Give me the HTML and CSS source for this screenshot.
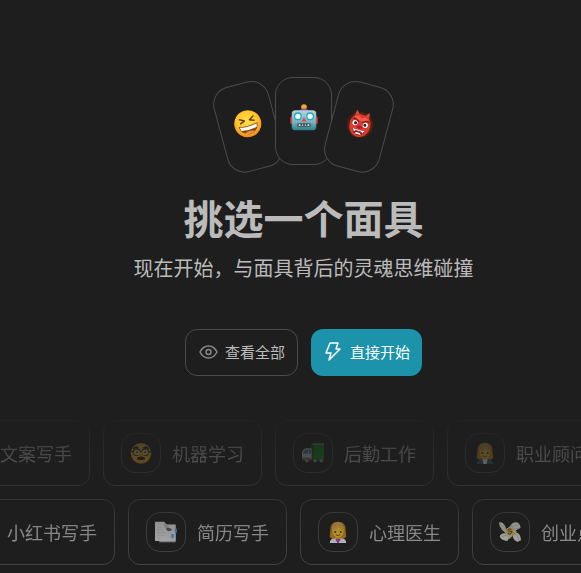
FILE: index.html
```html
<!DOCTYPE html>
<html lang="zh-CN">
<head>
  <meta charset="UTF-8" />
  <meta name="viewport" content="width=device-width, initial-scale=1" />
  <title>挑选一个面具</title>
  <link rel="stylesheet" href="styles.css">
</head>
<body>
  <!-- shared by two of the mask cards -->
  <svg class="sprite" aria-hidden="true">
    <symbol id="woman-head" viewBox="0 0 32 32">
      <path d="M16 1C9 1 5 5 5 12c0 4-1 8-1 11 2 3 6 3 9 2h6c3 1 7 1 9-2 0-3-1-7-1-11 0-7-4-11-11-11z" fill="#cf8a1c"/>
      <path d="M12 21h8v6h-8z" fill="#d99a1c"/>
      <path d="M16 7c-5 1-7 3-8 7 0 6 4 10 8 10s8-4 8-10c-1-4-3-6-8-7z" fill="#fdcb32"/>
      <path d="M16 1c5 1 9 5 9 13-4-1-8-4-9-7-1 4-4 6-9 7 0-7 3-12 9-13z" fill="#e6ac48"/>
      <circle cx="12" cy="16" r="1.5" fill="#493118"/>
      <circle cx="20" cy="16" r="1.5" fill="#493118"/>
      <path d="M13 20q3 2 6 0" stroke="#a6501b" stroke-width="1.5" fill="none"/>
    </symbol>
  </svg>

  <main class="page">
    <section class="hero">
      <div class="cards">
        <div class="card card-left">
          <svg class="emoji" viewBox="0 0 32 32" aria-hidden="true">
            <defs>
              <radialGradient id="face" cx=".5" cy=".4" r=".6">
                <stop offset="0" stop-color="#ffe04a"/>
                <stop offset=".65" stop-color="#ffc42c"/>
                <stop offset="1" stop-color="#f0851c"/>
              </radialGradient>
            </defs>
            <circle cx="16" cy="16" r="15.5" fill="url(#face)"/>
            <path d="M8 9l5 3-5 2M24 9l-5 3 5 2" stroke="#65400e" stroke-width="1.7" fill="none" stroke-linecap="round" stroke-linejoin="round"/>
            <path d="M5 17q11 3 22 0c0 6-5 11-11 11S5 23 5 17z" fill="#8a4a10"/>
            <path d="M6 18q10 3 20 0l-1 4q-9 2-18 0z" fill="#fff"/>
            <path d="M10 26q6-3 12 0-6 4-12 0z" fill="#e8943a"/>
          </svg>
        </div>
        <div class="card">
          <svg class="emoji" viewBox="0 0 32 32" aria-hidden="true">
            <defs>
              <linearGradient id="metal" x2="0" y2="1">
                <stop offset="0" stop-color="#b4d3d8"/>
                <stop offset=".6" stop-color="#76b3bf"/>
                <stop offset="1" stop-color="#28818e"/>
              </linearGradient>
            </defs>
            <rect x="0" y="14" width="4" height="9" rx="2" fill="#c72331"/>
            <rect x="28" y="14" width="4" height="9" rx="2" fill="#c72331"/>
            <circle cx="16" cy="3.5" r="3.2" fill="#f5a623"/>
            <path d="M11 9q0-4 5-4t5 4z" fill="#7d4eaa"/>
            <rect x="2" y="7" width="28" height="23" rx="4" fill="url(#metal)"/>
            <circle cx="9" cy="14" r="4.5" fill="#24a9bc"/>
            <circle cx="23" cy="14" r="4.5" fill="#24a9bc"/>
            <circle cx="9" cy="14" r="3" fill="#f3ffff"/>
            <circle cx="23" cy="14" r="3" fill="#f3ffff"/>
            <path d="M16 15l3 5h-6z" fill="#e94948"/>
            <rect x="8" y="22" width="16" height="4" rx="2" fill="#3d4f55"/>
            <path d="M10 23h2v2h-2zM14 23h1v2h-1zM17 23h1v2h-1zM20 23h2v2h-2z" fill="#e7edef"/>
          </svg>
        </div>
        <div class="card card-right">
          <svg class="emoji" viewBox="0 0 32 32" aria-hidden="true">
            <circle cx="16" cy="17" r="15" fill="#49240d"/>
            <path d="M8 8Q7 4 9 1l4 5zM24 8q1-4-1-7l-4 5z" fill="#d9453b"/>
            <path d="M16 5c7 0 12 4 12 12 0 9-6 14-12 14S4 26 4 17C4 9 9 5 16 5z" fill="#dd3832"/>
            <path d="M8 9q5-4 8 1 3-5 8-1-3 4-8 3-5 1-8-3z" fill="#f55b4b"/>
            <path d="M6 12q4-2 8 2M26 12q-4-2-8 2" stroke="#84251d" stroke-width="1.6" fill="none"/>
            <circle cx="10" cy="16" r="3" fill="#fff"/>
            <circle cx="22" cy="16" r="3" fill="#fff"/>
            <circle cx="10.5" cy="16" r="1.7" fill="#202020"/>
            <circle cx="21.5" cy="16" r="1.7" fill="#202020"/>
            <path d="M12 20q4-4 8 0l-4 2z" fill="#a91e27"/>
            <path d="M9 23q7 3 14 0-1 6-7 6t-7-6z" fill="#851b20"/>
            <path d="M9 22l2 4 2-2h6l2 2 2-4-2 1H11zM12 28l2-2h4l2 2z" fill="#fff"/>
          </svg>
        </div>
      </div>

      <h1>挑选一个面具</h1>
      <p class="subtitle">现在开始，与面具背后的灵魂思维碰撞</p>

      <div class="actions">
        <button type="button" class="btn btn-outline">
          <svg class="icon" viewBox="0 0 20 20" aria-hidden="true">
            <path d="M2 10c2-4 5-6 8.5-6s6.500 2 8.500 6c-2 4-5 6-8.500 6S4 14 2 10z"/>
            <circle cx="10.5" cy="10" r="2.5"/>
          </svg>
          <span>查看全部</span>
        </button>
        <button type="button" class="btn btn-primary">
          <svg class="icon" viewBox="0 0 20 20" aria-hidden="true">
            <path d="M7 1h8l-2 6h4L6 18l2-7H3z"/>
          </svg>
          <span>直接开始</span>
        </button>
      </div>
    </section>

    <section class="masks">
      <div class="mask-row row-one">
        <button type="button" class="mask">
          <span class="avatar"></span>
          <span>文案写手</span>
        </button>
        <button type="button" class="mask">
          <span class="avatar">
            <svg viewBox="0 0 32 32" aria-hidden="true">
              <circle cx="16" cy="16.5" r="15" fill="url(#face)"/>
              <path d="M4 9q4-5 9-1l-1 2q-4-2-7 1zM28 9q-4-5-9-1l1 2q4-2 7 1z" fill="#34251c"/>
              <circle cx="10" cy="15" r="5" fill="#fbdb67" stroke="#393126" stroke-width="1.5"/>
              <circle cx="22" cy="15" r="5" fill="#fbdb67" stroke="#393126" stroke-width="1.5"/>
              <path d="M0 14h5M27 14h5M15 14h2" stroke="#393126" stroke-width="1.5"/>
              <circle cx="10" cy="15" r="1.5" fill="#4a2b12"/>
              <circle cx="22" cy="15" r="1.5" fill="#4a2b12"/>
              <path d="M14 14h4l2 6q-4 3-8 0z" fill="#efa43b"/>
              <path d="M10 25q0-4 6-4t6 4q-6 2-12 0z" fill="#251d18"/>
            </svg>
          </span>
          <span>机器学习</span>
        </button>
        <button type="button" class="mask">
          <span class="avatar">
            <svg viewBox="0 0 32 32" aria-hidden="true">
              <path d="M14 3l3-1h15v23H14z" fill="#0f8a1a"/>
              <path d="M14 3l3-1h15v2H14z" fill="#6dc071"/>
              <path d="M14 4h3v21h-3z" fill="#0a6514"/>
              <path d="M0 25V15q2-6 7-6h7v16z" fill="#cbd3d7"/>
              <path d="M1 17q2-6 6-6h2v6z" fill="#378fae"/>
              <path d="M10 11h3v6h-3z" fill="#3d7a92"/>
              <path d="M0 22h14v3H0z" fill="#bd9150"/>
              <path d="M0 25h32v2H0z" fill="#52575a"/>
              <g fill="#8c9396" stroke="#303436">
                <circle cx="7" cy="27" r="3"/>
                <circle cx="19" cy="27" r="3"/>
                <circle cx="28" cy="27" r="3"/>
              </g>
            </svg>
          </span>
          <span>后勤工作</span>
        </button>
        <button type="button" class="mask">
          <span class="avatar">
            <svg viewBox="0 0 32 32" aria-hidden="true">
              <use href="#woman-head"/>
              <path d="M4 32q0-7 8-7h8q8 0 8 7z" fill="#33577e"/>
              <path d="M12 25h8l-2 7h-4z" fill="#f5f5f5"/>
            </svg>
          </span>
          <span>职业顾问</span>
        </button>
      </div>

      <div class="mask-row row-two">
        <button type="button" class="mask">
          <span class="avatar"></span>
          <span>小红书写手</span>
        </button>
        <button type="button" class="mask">
          <span class="avatar">
            <svg viewBox="0 0 32 32" aria-hidden="true">
              <path d="M6 6h24v25H6z" fill="#a5a8ab"/>
              <path d="M16 5h14v24H16z" fill="#d5d7d9"/>
              <path d="M0 1h13l8 8v20H0z" fill="#dcdcdc"/>
              <path d="M13 1l8 8-4 2q-5-1-4-10z" fill="#b7b7b7"/>
              <path d="M16 10q7-1 9 3l-4 2q-4 0-5-5z" fill="#606365"/>
              <path d="M3 9h7M3 13h9M3 17h13M3 21h12M3 25h6" stroke="#c2c4c6"/>
              <path d="M29 11h3v6h-3zM24 19h3v6h-3z" fill="#379eea"/>
            </svg>
          </span>
          <span>简历写手</span>
        </button>
        <button type="button" class="mask">
          <span class="avatar">
            <svg viewBox="0 0 32 32" aria-hidden="true">
              <use href="#woman-head"/>
              <path d="M4 32q0-7 8-7l2 1h4l2-1q8 0 8 7z" fill="#eef1f4"/>
              <path d="M12 26h8l-3 6h-2z" fill="#b13cc0"/>
            </svg>
          </span>
          <span>心理医生</span>
        </button>
        <button type="button" class="mask">
          <span class="avatar">
            <svg viewBox="0 0 32 32" aria-hidden="true">
              <path d="M10 10Q7 1 0 2q0 5 3 8 1 5 8 6zM16 9q2-8 11-7 5 3 4 8l-8 4z" fill="#dfdfd4"/>
              <path d="M22 17q9-2 10 11l-5 2q-6-2-7-8zM10 18q-8-1-9 5 3 6 11 6l4-6z" fill="#dfdfd4"/>
              <path d="M2 5q5 2 8 8M4 11l6 3M19 9q5-4 10-3M21 12l9-2M24 19q4 4 5 9M4 23l9-3" stroke="#a7a997" fill="none"/>
              <path d="M7 15L19 5l7 11-11 10z" fill="#c7c9b5"/>
              <path d="M9 12l4-2 11 8-4 4z" fill="#e3ae3a"/>
              <circle cx="16" cy="15" r="4.5" fill="#d5a83d"/>
              <path d="M18 12q-4-1-4 1t3 2 0 3-4-1" stroke="#6b5729" stroke-width="1.5" fill="none"/>
            </svg>
          </span>
          <span>创业点子</span>
        </button>
      </div>
    </section>
  </main>
</body>
</html>
```
FILE: styles.css
```css
* {
  box-sizing: border-box;
}

body {
  margin: 0;
  background: #1e1e1e;
  color: #bbb;
  font-family: "Noto Sans CJK SC", sans-serif;
}

.sprite {
  display: none;
}

.page {
  min-height: 100vh;
  padding-top: 77px;
  overflow: hidden;
}

.hero {
  display: flex;
  flex-direction: column;
  align-items: center;
  padding-left: 26px;
}

/* three tilted cards */
.cards {
  display: flex;
}

.card {
  width: 57px;
  height: 88px;
  padding-top: 26px;
  border: 1px solid #4b4b4b;
  border-radius: 18px;
  background: #1e1e1e;
  text-align: center;
}

/* the middle card lies over the left one, the right card over both */
.card-left {
  transform: rotate(-15deg) translateY(6px);
}

.card:nth-child(2) {
  z-index: 1;
}

.card-right {
  z-index: 2;
  transform: rotate(15deg) translateY(6px);
}

.emoji {
  display: block;
  width: 28px;
  height: 28px;
  margin: 0 auto;
}

h1 {
  margin: 22px 0 6px;
  font-size: 40px;
  line-height: 60px;
  font-weight: bold;
}

.subtitle {
  margin: 0;
  font-size: 20px;
  line-height: 30px;
}

.actions {
  display: flex;
  gap: 13px;
  margin-top: 46px;
}

button {
  font-family: inherit;
  color: inherit;
  cursor: pointer;
  white-space: nowrap;
}

.btn {
  display: flex;
  align-items: center;
  gap: 7px;
  height: 47px;
  padding: 0 12px 2px;
  border: none;
  border-radius: 12px;
  font-size: 15px;
  line-height: 20px;
}

.btn-outline {
  border: 1px solid #4b4b4b;
  background: transparent;
}

.btn-primary {
  background: #1d93ab;
  color: #fff;
}

.icon {
  width: 20px;
  height: 20px;
  fill: none;
  stroke: #888;
  stroke-width: 1.5;
  stroke-linejoin: round;
}

.btn-primary .icon {
  stroke: #fff;
}

/* mask list, fading in from the top */
.masks {
  display: flex;
  flex-direction: column;
  gap: 13px;
  margin-top: 44px;
  padding-bottom: 8px;
  -webkit-mask-image: linear-gradient(to bottom, transparent -20px, #000 180px);
  mask-image: linear-gradient(to bottom, transparent -20px, #000 180px);
}

.mask-row {
  display: flex;
  gap: 13px;
}

.row-one {
  margin-left: -69px;
}

.row-two {
  margin-left: -62px;
}

.mask {
  display: flex;
  flex-shrink: 0;
  align-items: center;
  gap: 11px;
  height: 66px;
  padding: 0 17px;
  border: 1px solid #4b4b4b;
  border-radius: 12px;
  background: transparent;
  font-size: 18px;
  line-height: 24px;
}

.avatar {
  display: flex;
  align-items: center;
  justify-content: center;
  width: 40px;
  height: 40px;
  border: 1px solid #4b4b4b;
  border-radius: 14px;
}

.avatar svg {
  width: 22px;
  height: 22px;
}
```
